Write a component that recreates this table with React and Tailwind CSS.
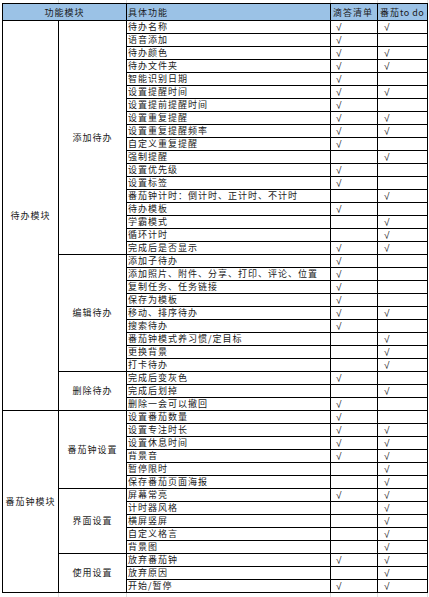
import React from "react";

const Y = 1;
const N = 0;

const modules = [
  {
    name: "待办模块",
    subs: [
      {
        name: "添加待办",
        rows: [
          ["待办名称", Y, Y],
          ["语音添加", Y, N],
          ["待办颜色", Y, Y],
          ["待办文件夹", Y, Y],
          ["智能识别日期", Y, N],
          ["设置提醒时间", Y, Y],
          ["设置提前提醒时间", Y, N],
          ["设置重复提醒", Y, Y],
          ["设置重复提醒频率", Y, Y],
          ["自定义重复提醒", Y, N],
          ["强制提醒", N, Y],
          ["设置优先级", Y, N],
          ["设置标签", Y, N],
          ["番茄钟计时：倒计时、正计时、不计时", N, Y],
          ["待办模板", Y, N],
          ["学霸模式", N, Y],
          ["循环计时", N, Y],
          ["完成后是否显示", Y, Y],
        ],
      },
      {
        name: "编辑待办",
        rows: [
          ["添加子待办", Y, N],
          ["添加照片、附件、分享、打印、评论、位置", Y, N],
          ["复制任务、任务链接", Y, N],
          ["保存为模板", Y, N],
          ["移动、排序待办", Y, Y],
          ["搜索待办", Y, N],
          ["番茄钟模式养习惯/定目标", N, Y],
          ["更换背景", N, Y],
          ["打卡待办", N, Y],
        ],
      },
      {
        name: "删除待办",
        rows: [
          ["完成后变灰色", Y, N],
          ["完成后划掉", N, Y],
          ["删除一会可以撤回", Y, N],
        ],
      },
    ],
  },
  {
    name: "番茄钟模块",
    subs: [
      {
        name: "番茄钟设置",
        rows: [
          ["设置番茄数量", Y, N],
          ["设置专注时长", Y, Y],
          ["设置休息时间", Y, Y],
          ["背景音", Y, Y],
          ["暂停限时", N, Y],
          ["保存番茄页面海报", N, Y],
        ],
      },
      {
        name: "界面设置",
        rows: [
          ["屏幕常亮", Y, Y],
          ["计时器风格", N, Y],
          ["横屏竖屏", N, Y],
          ["自定义格言", N, Y],
          ["背景图", N, Y],
        ],
      },
      {
        name: "使用设置",
        rows: [
          ["放弃番茄钟", Y, Y],
          ["放弃原因", N, Y],
          ["开始/暂停", Y, Y],
        ],
      },
    ],
  },
];

function GridStrip({ h }) {
  return (
    <div className={`ml-[3px] flex ${h}`}>
      <div className="w-[56px] border-r border-[#dedede]" />
      <div className="w-[68px] border-r border-[#dedede]" />
      <div className="w-[204px] border-r border-[#dedede]" />
      <div className="w-[47px] border-r border-[#dedede]" />
      <div className="w-[50px] border-r border-[#dedede]" />
    </div>
  );
}

function Tick({ on }) {
  return on ? (
    <span className="font-['Liberation_Sans',sans-serif] text-[10px] leading-[11px] tracking-normal">√</span>
  ) : null;
}

function Row({ row }) {
  const [label, a, b] = row;
  return (
    <div className="flex h-[13px]">
      <div className="w-[204px] border-r border-b border-black pl-[1px] flex items-end whitespace-nowrap">
        {label}
      </div>
      <div className="w-[47px] border-r border-b border-black pl-[5px] flex items-end">
        <Tick on={a} />
      </div>
      <div className="w-[50px] border-r border-b border-black pl-[6px] flex items-end">
        <Tick on={b} />
      </div>
    </div>
  );
}

export default function App() {
  return (
    <div className="w-[429px] h-[597px] overflow-hidden bg-white text-[#1a1a1a] text-[9px] leading-[12px] tracking-[1px] font-['Noto_Sans_CJK_SC','Noto_Sans',sans-serif]">
      <GridStrip h="h-[3px]" />
      <div className="ml-[2px] w-[426px] border-l border-t border-black">
        <div className="flex h-[17px] bg-[#9bc2e6]">
          <div className="w-[124px] border-r border-b border-black flex items-end justify-center pb-[1px]">
            功能模块
          </div>
          <div className="w-[204px] border-r border-b border-black flex items-end pl-[1px] pb-[1px]">
            具体功能
          </div>
          <div className="w-[47px] border-r border-b border-black flex items-end pl-[2px] pb-[1px] whitespace-nowrap">
            滴答清单
          </div>
          <div className="w-[50px] border-r border-b border-black flex items-end pl-[2px] pb-[1px] whitespace-nowrap">
            番茄<span className="tracking-[0.5px]">to do</span>
          </div>
        </div>

        {modules.map((m) => (
          <div key={m.name} className="flex">
            <div className="w-[56px] border-r border-b border-black flex items-center justify-center whitespace-nowrap">
              {m.name}
            </div>
            <div className="flex flex-col">
              {m.subs.map((s) => (
                <div key={s.name} className="flex">
                  <div className="w-[68px] border-r border-b border-black flex items-center justify-center whitespace-nowrap">
                    {s.name}
                  </div>
                  <div className="flex flex-col">
                    {s.rows.map((r) => (
                      <Row key={r[0]} row={r} />
                    ))}
                  </div>
                </div>
              ))}
            </div>
          </div>
        ))}
      </div>
      <GridStrip h="h-[5px]" />
    </div>
  );
}
